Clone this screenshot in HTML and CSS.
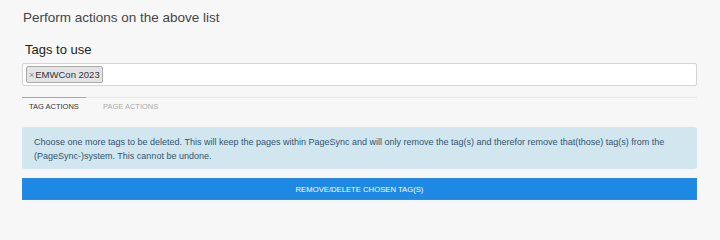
FILE: index.html
```html
<!DOCTYPE html>
<html lang="en">
<head>
<meta charset="utf-8">
<title>Tag actions</title>
<link rel="stylesheet" href="styles.css">
</head>
<body>
<div class="panel">
  <h2 class="title">Perform actions on the above list</h2>
  <section class="content">
    <label class="field-label">Tags to use</label>
    <div class="tag-input">
      <span class="chip"><span class="chip-x">×</span>EMWCon 2023</span>
    </div>
    <nav class="tabs">
      <span class="tab active">TAG ACTIONS</span>
      <span class="tab">PAGE ACTIONS</span>
    </nav>
    <div class="alert">Choose one more tags to be deleted. This will keep the pages within PageSync and will only remove the tag(s) and therefor remove that(those) tag(s) from the (PageSync-)system. This cannot be undone.</div>
    <button class="btn">REMOVE/DELETE CHOSEN TAG(S)</button>
  </section>
</div>
</body>
</html>
```

FILE: styles.css
```css
html, body {
  margin: 0;
  padding: 0;
  background: #f7f7f7;
}
body {
  font-family: "Liberation Sans", Arial, sans-serif;
  color: #333;
}
.panel {
  padding: 8px 23px 0 22px;
}
.title {
  margin: 0 0 0 1px;
  font-family: "Liberation Sans", Arial, sans-serif;
  font-weight: 400;
  font-size: 13.5px;
  line-height: 20px;
  color: #454545;
}
.content {
  display: flex;
  flex-direction: column;
}
.field-label {
  margin: 13px 0 0 3px;
  font-size: 13px;
  line-height: 17px;
  color: #222;
}
.tag-input {
  margin-top: 5px;
  height: 21px;
  background: #fff;
  border: 1px solid #d4d4d4;
  border-radius: 2px;
  display: flex;
  align-items: center;
  padding: 0 3px;
}
.chip {
  display: inline-flex;
  align-items: center;
  height: 15px;
  padding: 0 2px;
  background: #e4e4e4;
  border: 1px solid #aaa;
  border-radius: 2px;
  font-size: 9.5px;
  color: #333;
}
.chip-x {
  color: #888;
  font-size: 9px;
  margin-right: 1px;
}
.tabs {
  margin-top: 11px;
  border-top: 1px solid #e6e6e6;
  display: flex;
}
.tab {
  white-space: nowrap;
  font-size: 7.5px;
  line-height: 18px;
  padding: 0 7px;
  width: 64px;
  box-sizing: border-box;
  color: #aaa;
  margin-top: -1px;
  border-top: 1px solid transparent;
  margin-right: 10px;
}
.tab.active {
  color: #333;
  border-top-color: #72b4ec;
}
.alert {
  margin-top: 11px;
  background: #d2e6f0;
  border-radius: 3px;
  padding: 8px 12px 6px 12px;
  font-size: 9px;
  line-height: 14px;
  color: #31556e;
}
.btn {
  margin-top: 9px;
  height: 22px;
  border: 1px solid #2b8ae6;
  background: #1e88e5;
  color: #fff;
  font-family: "Liberation Sans", Arial, sans-serif;
  font-size: 7.7px;
  padding: 0;
  border-radius: 0;
}
```
